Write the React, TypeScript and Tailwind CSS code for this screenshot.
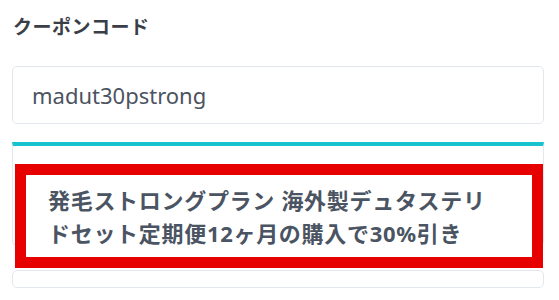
import React from 'react';

const font = { fontFamily: '"Noto Sans", "Noto Sans CJK JP", sans-serif' };

export default function App() {
  return (
    <div
      className="relative w-[559px] h-[300px] overflow-hidden bg-white px-[12px] pt-[14px]"
      style={font}
    >
      <label className="block pl-[1px] text-[19px] font-bold leading-[27px] tracking-[0.5px] text-[#3a3f47]">
        クーポンコード
      </label>

      <div className="mt-[25px] flex h-[58px] w-[532px] items-center rounded-[5px] border border-[#e3e7ee] px-[19px]">
        <span className="text-[22px] leading-none text-[#4b5361]">madut30pstrong</span>
      </div>

      {/* suggestion panel */}
      <div className="mt-[18px] h-[104px] w-[532px] rounded-b-[5px] border-x border-b border-t-4 border-x-[#e3e7ee] border-b-[#e3e7ee] border-t-[#17c3cc]" />

      <div className="mt-[24px] h-[18px] w-[532px] rounded-[5px] border border-[#e3e7ee]" />

      {/* highlight */}
      <div className="absolute left-[15px] top-[164px] h-[104px] w-[528px] border-[11px] border-[#e60000] bg-white pl-[22px] pt-[9px]">
        <p className="text-[22px] font-bold leading-[33px] tracking-[0.7px] text-[#4a5462] whitespace-nowrap">
          発毛ストロングプラン 海外製デュタステリ
          <br />
          ドセット定期便12ヶ月の購入で30%引き
        </p>
      </div>
    </div>
  );
}
